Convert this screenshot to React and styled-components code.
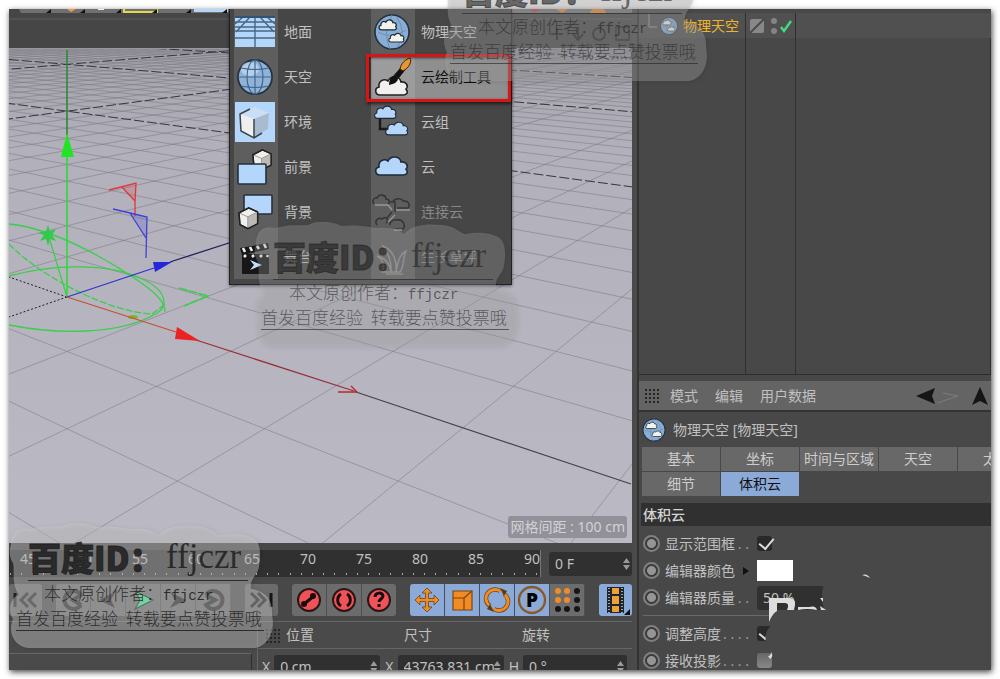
import React from 'react'
import styled, { createGlobalStyle, css } from 'styled-components'

// ground grid, seen along its diagonal
const GRID = { x: 67, horizon: -14, depth: 6.73, rise: 2094, spread: 934 }

function project(i, j) {
  const d = GRID.depth + (i + j) / 2
  return [
    (GRID.x + (GRID.spread * (i - j)) / 2 / d).toFixed(1),
    (GRID.horizon + GRID.rise / d).toFixed(1),
  ]
}

function gridPath(c) {
  const near = -2 * GRID.depth - c + 1
  const a = project(c, near)
  const b = project(c, 120)
  const e = project(near, c)
  const f = project(120, c)
  return `M${a[0]} ${a[1]}L${b[0]} ${b[1]}M${e[0]} ${e[1]}L${f[0]} ${f[1]}`
}

const minorLines = []
const majorLines = []
for (let c = -8; c <= 60; c += 1) {
  if (c === 0) continue
  if (c % 10 === 0) majorLines.push(c)
  else minorLines.push(c)
}

const cloud = 'M8 27C3 27 2 20 7 19C6 13 12 10 16 13C19 7 28 8 29 14C34 13 37 18 34 21C37 25 34 27 31 27Z'

function Cloud({ fill = '#b5d6fb', stroke = '#1d2b38', ...rest }) {
  return <path d={cloud} fill={fill} stroke={stroke} strokeWidth="1.6" {...rest} />
}

function Cube({ x = 0, y = 0, s = 1 }) {
  return (
    <g transform={`translate(${x} ${y}) scale(${s})`} stroke="#222" strokeWidth="1.4" strokeLinejoin="round">
      <path d="M1 6L11 1L20 5L20 17L10 22L2 18Z" fill="#f1efec" />
      <path d="M10 10L20 5L20 17L10 22Z" fill="#bdbab6" stroke="none" />
      <path d="M1 6L10 10L20 5M10 10V22" fill="none" stroke="#999" strokeWidth="1" />
      <path d="M1 6L11 1L20 5L20 17L10 22L2 18Z" fill="none" />
    </g>
  )
}

function Globe() {
  return (
    <g>
      <circle cx="20" cy="20" r="17" fill="#8fb3d8" stroke="#26323e" strokeWidth="1.8" />
      <ellipse cx="15" cy="12" rx="9" ry="7" fill="#c3dcf4" opacity="0.7" />
      <g fill="none" stroke="#42678c" strokeWidth="1.2">
        <ellipse cx="20" cy="20" rx="8" ry="17" />
        <path d="M20 3V37M3 20H37M6 11Q20 14 34 11M6 29Q20 32 34 29" />
      </g>
    </g>
  )
}

function SkyGlobe({ size }) {
  return (
    <svg width={size} height={size} viewBox="0 0 40 40">
      <circle cx="20" cy="20" r="17" fill="#8aaed3" stroke="#26323e" strokeWidth="1.6" />
      <path d="M6 20Q20 28 34 18M20 3Q10 20 18 37M24 4Q36 20 25 36" fill="none" stroke="#6b90b5" />
      <Cloud fill="#f3f3ee" transform="translate(5 3) scale(0.55)" strokeWidth="2.4" />
      <Cloud fill="#f3f3ee" transform="translate(15 17) scale(0.48)" strokeWidth="2.4" />
    </svg>
  )
}

const menuArt = {
  floor: (
    <g>
      <rect y="5" width="40" height="30" fill="#b5d6fb" />
      <g stroke="#466785" strokeWidth="1.4">
        <path d="M0 10H40M0 15H40M0 19H40M0 26H40M20 5V35M15 5L1 20M25 5L39 20M8 5L0 12M32 5L40 12" fill="none" />
      </g>
      <path d="M0 5H40" stroke="#34536f" strokeWidth="2" />
    </g>
  ),
  sky: <Globe />,
  environment: (
    <g>
      <rect width="40" height="40" fill="#b5d6fb" />
      <path d="M5 12L20 5L34 11L33 27L19 36L6 29Z" fill="#c9dff5" />
      <path d="M5 12L19 17V36L6 29Z" fill="#efefef" />
      <path d="M19 17L34 11L33 27L19 36Z" fill="#a9bccf" />
      <path d="M15 7L5 12L6 29L19 36L27 31M19 17V36" fill="none" stroke="#3b444d" strokeWidth="1.5" />
    </g>
  ),
  foreground: (
    <g>
      <Cube x="17" y="2" s="0.95" />
      <rect x="3" y="17" width="28" height="20" rx="1" fill="#b5d6fb" stroke="#26313c" strokeWidth="1.6" />
    </g>
  ),
  background: (
    <g>
      <rect x="9" y="3" width="28" height="19" rx="1" fill="#b5d6fb" stroke="#26313c" strokeWidth="1.6" />
      <Cube x="3" y="15" s="0.98" />
    </g>
  ),
  stage: (
    <g>
      <rect x="7" y="17" width="27" height="20" fill="#171717" />
      <path d="M5 11L33 6L34 12L7 18Z" fill="#171717" />
      <path d="M8 11L10 15M15 10L17 14M22 9L24 12M29 7L31 11M9 20L11 18M17 20L19 18M25 20L27 18M32 20L33 18" stroke="#eee" strokeWidth="2.6" />
      <path d="M15 23L27 28L15 33L19 28Z" fill="#c6e0fb" />
    </g>
  ),
  cloudPaint: (
    <g>
      <Cloud fill="#f2f0ef" transform="translate(0 11)" stroke="#222" />
      <path d="M17 28C17 23 19 19 23 18L26 21C26 25 22 27 17 28Z" fill="#111" />
      <path d="M22 18L30 9L34 12L27 21Z" fill="#111" />
      <path d="M28 12C29 6 34 2 38 1C40 5 37 11 31 14Z" fill="#e8962e" stroke="#3a2409" />
    </g>
  ),
  cloudGroup: (
    <g>
      <path d="M8 16V27H16" fill="none" stroke="#1a1a1a" strokeWidth="2.4" />
      <Cloud transform="translate(0 -2) scale(0.68)" />
      <Cloud transform="translate(11 14) scale(0.7)" />
    </g>
  ),
  cloud: <Cloud transform="translate(0 1)" />,
  cloudLink: (
    <g fill="none" stroke="#303030" strokeWidth="1.6" opacity="0.85">
      <path d="M2 12C-1 8 3 5 5 6C7 1 14 3 14 7C18 7 18 11 16 12M18 10H23V20M21 9C23 7 29 5 31 9C36 8 39 13 36 16H25" />
      <path d="M20 20L14 27M5 33C2 29 6 25 10 27C14 23 18 29 14 31M18 33C17 29 23 27 26 28C31 27 34 34 31 37H23" />
      <path d="M3 13H16L20 18M24 18H38M23 23L16 30M22 38H30" stroke="#a3a3a3" strokeWidth="1.4" />
    </g>
  ),
  grass: (
    <g fill="none" stroke="#8f8f8f" strokeWidth="1.4">
      <path d="M10 35C14 26 8 20 5 19C13 21 18 27 19 35C20 22 14 14 11 9C20 13 25 22 24 35C26 24 28 17 34 14C30 22 33 28 28 35Z" />
      <path d="M14 37H31" />
    </g>
  ),
}

const leftMenu = [
  ['floor', '地面'],
  ['sky', '天空'],
  ['environment', '环境'],
  ['foreground', '前景'],
  ['background', '背景'],
  ['stage', '舞台'],
]

const rightMenu = [
  ['physicalSky', '物理天空'],
  ['cloudPaint', '云绘制工具'],
  ['cloudGroup', '云组'],
  ['cloud', '云'],
  ['cloudLink', '连接云'],
  ['grass', '生长草坪'],
]

function MenuList({ items, active, disabledFrom }) {
  return (
    <MenuColumn>
      {items.map(([art, label], index) => (
        <MenuButton key={art} $active={art === active} disabled={index >= disabledFrom}>
          <MenuIcon $active={art === active}>
            {art === 'physicalSky' ? (
              <SkyGlobe size={40} />
            ) : (
              <svg width="40" height="40" viewBox="0 0 40 40">{menuArt[art]}</svg>
            )}
          </MenuIcon>
          {label}
        </MenuButton>
      ))}
    </MenuColumn>
  )
}

function Viewport() {
  return (
    <Scene viewBox="9 49 623 494" preserveAspectRatio="xMinYMid slice" aria-label="透视视图">
      <defs>
        <linearGradient id="floor" x1="0" y1="0" x2="0" y2="1">
          <stop offset="0" stopColor="#a3a1aa" />
          <stop offset="0.2" stopColor="#b2b0ba" />
          <stop offset="1" stopColor="#bbb9c3" />
        </linearGradient>
      </defs>
      <rect x="9" y="49" width="623" height="494" fill="url(#floor)" />
      <path d={minorLines.map(gridPath).join('')} fill="none" stroke="#74727c" strokeOpacity="0.48" />
      <path d={majorLines.map(gridPath).join('')} fill="none" stroke="#36353c" strokeDasharray="10 3" />
      <path d="M67 297L9 277M67 297L9 317" stroke="#222" strokeDasharray="2 2" />
      <path d="M356 392L631 484" stroke="#444" strokeWidth="1.2" />

      <g fill="none" stroke="#39cf4c" strokeWidth="1.3">
        <path d="M9 224C60 229 120 268 140 282C160 296 165 304 165 312" />
        <path d="M9 276C60 262 112 265 140 278C168 290 168 306 157 313C120 336 55 334 9 325" />
        <path d="M9 244C40 276 108 312 152 314L165 304" strokeDasharray="7 2" />
        <path d="M48 234L67 297" />
        <path d="M179 288L208 296L184 306" strokeWidth="1.6" strokeDasharray="9 1" />
      </g>
      <path d="M48 225L50 231L56 229L52 235L56 241L50 239L48 246L46 239L40 241L44 235L38 233L46 231Z" fill="#33c94c" />
      <ellipse cx="133" cy="317" rx="5" ry="2" fill="#7fb52d" />

      <path d="M67 50V135" stroke="#2b8a36" strokeWidth="1.6" />
      <path d="M67 135V297" stroke="#2fd83c" strokeWidth="1.6" />
      <path d="M67 133L61 157H74Z" fill="#22e422" />
      <path d="M67 297L154 268" stroke="#2834cf" strokeWidth="1.3" />
      <path d="M170 262L235 241" stroke="#1d1f5e" strokeWidth="1.3" />
      <path d="M153 262L172 262L155 272Z" fill="#2626da" />
      <path d="M67 297L176 332" stroke="#c8502f" strokeWidth="1.2" />
      <path d="M196 340L354 391" stroke="#96303a" strokeWidth="1.3" />
      <path d="M351 386L357 392L338 392" fill="none" stroke="#b32b2b" strokeWidth="1.4" />
      <path d="M177 327L200 341L175 339Z" fill="#ec2222" />

      <g fill="none" strokeWidth="1.3">
        <path d="M109 190L136 183L135 202V216M122 187L135 201" stroke="#e0363c" />
        <path d="M113 209L130 213L147 217L146 258M130 213L146 238" stroke="#4040d8" />
      </g>
      <path d="M123 187L136 183L135 200Z" fill="#e0363c" opacity="0.2" />
      <path d="M130 213L147 217L146 238Z" fill="#4040d8" opacity="0.2" />
    </Scene>
  )
}

const playArt = {
  start: <path d="M6 9V23M19 9L12 16L19 23M27 9L20 16L27 23" fill="none" stroke="#222" strokeWidth="3" />,
  prevKey: <path d="M25 21A9 9 0 1 1 25 11L17 16L25 21" fill="none" stroke="#222" strokeWidth="4" />,
  prev: <path d="M8 16L24 8L20 16L24 24Z" fill="#1c1c1c" />,
  play: <path d="M9 7L27 16L9 25L14 16Z" fill="#34f590" stroke="#14301f" strokeWidth="1.2" />,
  next: <path d="M9 8L25 16L9 24L14 16Z" fill="#1c1c1c" />,
  nextKey: <path d="M10 11A9 9 0 1 1 10 21L19 16L10 11" fill="none" stroke="#222" strokeWidth="4" />,
  end: <path d="M27 9V23M14 9L21 16L14 23M7 9L14 16L7 23" fill="none" stroke="#151515" strokeWidth="3" />,
  key: (
    <g>
      <circle cx="17" cy="16" r="11" fill="#ef5257" stroke="#2b1516" strokeWidth="2" />
      <path d="M12 20L22 12" stroke="#1a0c0c" strokeWidth="3" />
      <circle cx="12" cy="20" r="3" fill="#1a0c0c" />
      <circle cx="21" cy="12" r="3" fill="#1a0c0c" />
    </g>
  ),
  auto: (
    <g>
      <circle cx="17" cy="16" r="11" fill="#ef5257" stroke="#2b1516" strokeWidth="2" />
      <path d="M14 10A7 7 0 0 0 14 22M20 10A7 7 0 0 1 20 22" fill="none" stroke="#1a0c0c" strokeWidth="2.8" />
    </g>
  ),
  help: (
    <g>
      <circle cx="17" cy="16" r="11" fill="#ef5257" stroke="#2b1516" strokeWidth="2" />
      <path d="M13 13C13 8 21 8 21 12C21 15 17 15 17 18M17 20V23" fill="none" stroke="#1a0c0c" strokeWidth="3" />
    </g>
  ),
  move: (
    <path
      d="M17 4L22 9H18.500V14.500H24V11L29 16L24 21V17.500H18.500V23H22L17 28L12 23H15.500V17.500H10V21L5 16L10 11V14.500H15.500V9H12Z"
      fill="#f28b23"
      stroke="#6b4317"
      strokeWidth="0.8"
    />
  ),
  scale: (
    <g stroke="#7a4513" strokeWidth="1.2">
      <path d="M8 7H27V26H8Z" fill="#f28b23" />
      <path d="M8 14H19V26M19 14L27 7" fill="none" />
    </g>
  ),
  rotate: (
    <g>
      <path d="M10 22A9 9 0 0 1 20 7M24 10A9 9 0 0 1 14 25" fill="none" stroke="#6b4317" strokeWidth="4.4" />
      <path d="M10 22A9 9 0 0 1 20 7M24 10A9 9 0 0 1 14 25" fill="none" stroke="#f28b23" strokeWidth="3" />
      <path d="M20 4L27 7L24 12ZM14 28L7 25L10 20Z" fill="#5d3b16" />
    </g>
  ),
  film: (
    <g>
      <rect x="8" y="3" width="17" height="26" fill="#20242c" />
      <path d="M13 4H20V10H13ZM13 12H20V20H13ZM13 22H20V28H13Z" fill="#efa139" />
      <path d="M10 4V29M23 4V29" stroke="#c7d3e6" strokeWidth="1.5" strokeDasharray="1 2" />
      <path d="M31 25V31H25Z" fill="#111" />
    </g>
  ),
  param: (
    <g>
      <circle cx="17" cy="16" r="13" fill="none" stroke="#8a5a26" strokeWidth="2.4" />
      <text x="17" y="23" textAnchor="middle" fontFamily="Open Sans, sans-serif" fontWeight="800" fontSize="19">P</text>
    </g>
  ),
  points: (
    <g>
      {[7, 16, 25].map((y, row) =>
        [8, 17, 27].map((x, col) => (
          <circle key={`${x}-${y}`} cx={x} cy={y} r="3" fill={row < 2 && col < 2 ? '#f28b23' : '#161616'} />
        ))
      )}
    </g>
  ),
}

const playGroups = [
  [['start', '转到开始']],
  [['prevKey', '上一关键帧'], ['prev', '上一帧'], ['play', '播放'], ['next', '下一帧'], ['nextKey', '下一关键帧']],
  [['end', '转到结束']],
  [['key', '记录'], ['auto', '自动关键帧'], ['help', '帮助']],
  [['move', '移动', 1], ['scale', '缩放', 1], ['rotate', '旋转', 1], ['param', '参数', 1], ['points', '点级别']],
  [['film', '动画', 1]],
]

function Watermark({ x, y, tone, ink }) {
  return (
    <Stamp style={{ left: x, top: y }} $ink={ink}>
      <svg width="270" height="128" viewBox="0 0 270 128" aria-hidden="true">
        <path
          d="M2 22C2 8 10 3 22 6C36 2 45 4 54 3C66 -3 78 0 88 4C108 2 116 6 125 6C140 5 145 9 150 12C160 1 176 2 188 3C202 4 206 12 212 12C228 9 236 12 242 14C252 18 252 30 250 44C249 52 240 56 242 66C256 68 264 76 263 92C266 104 262 122 246 125H22C6 125 -2 110 4 96C-2 86 2 74 10 72C2 60 6 48 4 40C0 34 0 28 2 22Z"
          fill={tone}
        />
      </svg>
      <StampText>
        <StampTitle>
          <b>百度ID：</b>
          <span>ffjczr</span>
        </StampTitle>
        <StampLine $inset>
          本文原创作者：<span>ffjczr</span>
        </StampLine>
        <StampLine $ruled>首发百度经验&nbsp;<i />转载要点赞投票哦</StampLine>
      </StampText>
    </Stamp>
  )
}

function App() {
  return (
    <Page>
      <GlobalStyle />
      <Frame>
        <Main>
          <TopBar>
            <svg width="623" height="39" viewBox="9 9 623 39" aria-hidden="true">
              <path d="M19 9H229V13H21Z" fill="#707070" />
              <path d="M124 9V12H157V9" fill="none" stroke="#e3d84a" strokeWidth="2" />
              <path d="M194 9H228V12H194Z" fill="#b5d6fb" />
              <path d="M51 9V13H46ZM85 9V13H80ZM121 9V13H116ZM157 9V13H152ZM191 9V13H186ZM227 9V13H222Z" fill="#111" />
              <path d="M67 9H76L71 12Z" fill="#ef9a42" />
              <path d="M98 9H104V10H98Z" fill="#eee" />
              <path d="M9 19H632" stroke="#5c5c5c" />
              <path d="M512 9H632V13H512Z" fill="#777" />
              <path d="M530 9H540L535 12Z" fill="#d43a40" />
              <path d="M556 9H568L562 13ZM592 9H604L606 13H590Z" fill="#ea8a35" />
              <g fill="none" stroke="#222" strokeWidth="2">
                <path d="M557 28V40M551 34H563M578 27V38M573 34L578 40L583 34" />
                <circle cx="599" cy="34" r="6" />
                <path d="M616 27H629V40H616Z" strokeWidth="1.4" />
              </g>
            </svg>
          </TopBar>
          <ViewArea>
            <Viewport />
            <GridInfo>网格间距 : 100 cm</GridInfo>
          </ViewArea>
          <Timeline>
            <Ruler>
              <Frames>
                {[45, 50, 55, 60, 65, 70, 75, 80, 85, 90].map(n => (
                  <li key={n}>{n}</li>
                ))}
              </Frames>
            </Ruler>
            <FrameField>
              <input aria-label="当前帧" defaultValue="0 F" />
              <Spinner />
            </FrameField>
          </Timeline>
          <Playback>
            {playGroups.map(group => (
              <ButtonGroup key={group[0][0]}>
                {group.map(([name, label, on]) => (
                  <PlayButton key={name} aria-label={label} $on={on}>
                    <svg width="34" height="32" viewBox="0 0 34 32">{playArt[name]}</svg>
                  </PlayButton>
                ))}
              </ButtonGroup>
            ))}
          </Playback>
          <Bottom>
            <Materials />
            <Coordinates>
              <CoordHead>
                <Grip />
                <span>位置</span>
                <span>尺寸</span>
                <span>旋转</span>
              </CoordHead>
              <CoordRow>
                {[['X', '0 cm'], ['X', '43763.831 cm'], ['H', '0 °']].map(([axis, value]) => (
                  <CoordField key={value}>
                    {axis}
                    <CoordBox>
                      <input defaultValue={value} />
                      <Spinner />
                    </CoordBox>
                  </CoordField>
                ))}
              </CoordRow>
            </Coordinates>
          </Bottom>
        </Main>

        <Side>
          <ObjectTree>
            <TreeRow>
              <TreeName>
                <svg width="20" height="24" viewBox="0 0 20 24">
                  <path d="M10 0V13H18" fill="none" stroke="#999" />
                </svg>
                <SkyGlobe size={20} />
                <span>物理天空</span>
              </TreeName>
              <TreeFlags>
                <svg width="48" height="24" viewBox="0 0 48 24">
                  <rect x="4" y="6" width="14" height="14" rx="2" fill="#888" />
                  <path d="M4 20L18 6" stroke="#4b4b4b" strokeWidth="2" />
                  <circle cx="28" cy="8" r="3" fill="#848484" />
                  <circle cx="28" cy="18" r="3" fill="#848484" />
                  <path d="M35 14L38 18L45 8" fill="none" stroke="#3fdc84" strokeWidth="2.4" />
                </svg>
              </TreeFlags>
            </TreeRow>
            <TreeBody>
              <div />
              <div />
              <div />
            </TreeBody>
          </ObjectTree>
          <AttrBar>
            <Grip />
            <button>模式</button>
            <button>编辑</button>
            <button>用户数据</button>
            <svg width="76" height="26" viewBox="0 0 76 26" aria-hidden="true">
              <path d="M22 20L43 13L28 10" fill="none" stroke="#7c7c7c" />
              <path d="M1 13L20 5L17 13L20 21Z" fill="#151515" />
              <path d="M65 4L73 22L65 18L57 22Z" fill="#151515" />
            </svg>
          </AttrBar>
          <ObjectTitle>
            <SkyGlobe size={26} />
            物理天空 [物理天空]
          </ObjectTitle>
          <Tabs>
            {['基本', '坐标', '时间与区域', '天空', '太阳'].map(t => (
              <Tab key={t}>{t}</Tab>
            ))}
          </Tabs>
          <Tabs>
            <Tab>细节</Tab>
            <Tab $active>体积云</Tab>
          </Tabs>
          <Section>体积云</Section>
          <Props>
            <PropRow>
              <Dot />
              <label htmlFor="bounds">显示范围框<i>. .</i></label>
              <Check id="bounds" type="checkbox" defaultChecked />
            </PropRow>
            <PropRow>
              <Dot />
              <label htmlFor="color">编辑器颜色<Arrow /></label>
              <Swatch id="color" aria-label="编辑器颜色" />
            </PropRow>
            <PropRow>
              <Dot />
              <label htmlFor="quality">编辑器质量<i>. .</i></label>
              <Quality id="quality" defaultValue="50 %" />
            </PropRow>
            <Rule />
            <PropRow>
              <Dot />
              <label htmlFor="height">调整高度<i>. . . .</i></label>
              <Check id="height" type="checkbox" defaultChecked />
            </PropRow>
            <PropRow>
              <Dot />
              <label htmlFor="shadow">接收投影<i>. . . .</i></label>
              <Check id="shadow" type="checkbox" />
            </PropRow>
            <Remnant viewBox="0 0 120 100" aria-hidden="true">
              <path d="M68 12Q62 22 68 40Q34 36 20 48Q6 58 9 70Q13 78 30 78L116 76V12Z" fill="#484848" />
              <path d="M12 26H32Q39 26 38 33L37 38H30Q33 31 28 31H20V39Q15 42 12 50Z" fill="#ddd" />
              <path d="M41 35H52Q59 33 60 38Q50 36 41 38ZM63 34L69 38H64ZM63 26H66V30Z" fill="#ddd" />
              <path d="M105 3Q110 1 113 6Q109 4 105 3Z" fill="#ddd" />
              <path d="M11 84Q14 84 14 80Q17 84 13 87Z" fill="#ddd" />
            </Remnant>
          </Props>
        </Side>

        <Menu>
          <MenuList items={leftMenu} disabledFrom={9} />
          <MenuList items={rightMenu} active="cloudPaint" disabledFrom={4} />
          <Highlight />
        </Menu>
      </Frame>

      <Watermark x={9} y={523} tone="rgba(205,205,205,0.43)" ink="0.88" />
      <Watermark x={254} y={222} tone="rgba(178,178,178,0.28)" ink="0.6" />
      <Watermark x={443} y={-44} tone="rgba(170,170,170,0.36)" ink="0.6" />
    </Page>
  )
}

export default App

const GlobalStyle = createGlobalStyle`
  * {
    box-sizing: border-box;
  }

  body {
    margin: 0;
    background: #fff;
    color: #c0c0c0;
    font-family: "Noto Sans", "Noto Sans CJK SC", sans-serif;
    font-size: 14px;
    line-height: 20px;
  }

  button, input {
    font: inherit;
    color: inherit;
    border: 0;
    padding: 0;
    margin: 0;
    background: none;
  }

  svg {
    display: block;
    flex: none;
  }
`

const Page = styled.div`
  position: relative;
  height: 100vh;
  padding: 9px;
  overflow: hidden;
`

const Frame = styled.div`
  position: relative;
  display: grid;
  grid-template-columns: minmax(0, 1fr) 354px;
  gap: 5px;
  height: 100%;
  background: #4a4a4a;
  box-shadow: 1px 2px 6px rgba(0, 0, 0, 0.75);
`

const Main = styled.main`
  display: flex;
  flex-direction: column;
  min-width: 0;
  min-height: 0;
`

const TopBar = styled.div`
  height: 40px;
  overflow: hidden;
  background: #464646;
  border-bottom: 1px solid #999;
`

const ViewArea = styled.div`
  position: relative;
  flex: 1;
  min-height: 0;
  overflow: hidden;
`

const Scene = styled.svg`
  width: 100%;
  height: 100%;
`

const GridInfo = styled.div`
  position: absolute;
  right: 5px;
  bottom: 5px;
  padding: 1px 2px;
  border-radius: 3px;
  background: #92919a;
  color: #d2d2d6;
`

const Timeline = styled.div`
  display: flex;
  gap: 8px;
  height: 36px;
  padding: 7px 0 2px;
  background: #484848;
`

const Ruler = styled.div`
  flex: 1;
  overflow: hidden;
  border-right: 1px solid #777;
  background: #303030;
`

const Frames = styled.ul`
  display: flex;
  list-style: none;
  margin: 0 0 0 -9px;
  padding: 0;

  li {
    flex: none;
    width: 56px;
    height: 27px;
    line-height: 18px;
    text-align: center;
    background: radial-gradient(circle, #aaa 1px, transparent 1px) 5px 20px / 11px 8px repeat-x;
  }
`

const FrameField = styled.div`
  display: flex;
  align-items: center;
  width: 83px;
  height: 24px;
  margin-top: 2px;
  padding: 0 2px 0 6px;
  border-radius: 3px;
  background: #303030;

  input {
    flex: 1;
    width: 0;
  }
`

const Spinner = styled.span`
  width: 7px;
  height: 12px;
  background: #999;
  clip-path: polygon(50% 0, 100% 42%, 0 42%, 0 58%, 100% 58%, 50% 100%, 0 58%, 0 42%);
`

const Playback = styled.div`
  display: flex;
  gap: 14px;
  height: 43px;
  padding: 5px 0;
  background: #484848;
  border-bottom: 1px solid #666;
`

const ButtonGroup = styled.div`
  display: flex;
  border-radius: 3px;
  overflow: hidden;
`

const PlayButton = styled.button`
  display: flex;
  align-items: center;
  justify-content: center;
  width: 35px;
  height: 32px;
  background: ${props => (props.$on ? '#8caad8' : '#6c6c6c')};
  border-right: 1px solid #4b4f57;

  &:only-child {
    width: 33px;
    border-right: 0;
  }
`

const Bottom = styled.div`
  display: grid;
  grid-template-columns: 243px minmax(0, 1fr);
  gap: 5px;
  height: 48px;
  overflow: hidden;
`

const Materials = styled.div`
  margin-top: 31px;
  border-top: 1px solid #666;
  border-right: 1px solid #2e2e2e;
`

const Coordinates = styled.div`
  min-width: 0;
  border-left: 1px solid #666;
`

const CoordHead = styled.div`
  display: grid;
  grid-template-columns: 13px 1fr 1fr 1fr;
  column-gap: 8px;
  align-items: center;
  height: 27px;
  padding-left: 7px;
  border-bottom: 1px solid #666;
`

const CoordRow = styled.div`
  display: grid;
  grid-template-columns: repeat(3, 1fr);
  gap: 5px;
  padding: 6px 5px 0 4px;
`

const CoordField = styled.label`
  display: flex;
  gap: 4px;
  line-height: 24px;
`

const CoordBox = styled.span`
  display: flex;
  align-items: center;
  flex: 1;
  min-width: 0;
  height: 24px;
  padding: 0 3px 0 6px;
  border-radius: 3px;
  background: #303030;

  input {
    flex: 1;
    width: 0;
  }
`

const Grip = styled.span`
  width: 15px;
  height: 15px;
  background: radial-gradient(circle, #262626 1px, transparent 1px) 0 0 / 4px 4px;
`

const Side = styled.aside`
  display: flex;
  flex-direction: column;
  min-height: 0;
  overflow: hidden;
  background: #484848;
  border-left: 2px solid #333;
`

const treeColumns = css`
  display: grid;
  grid-template-columns: 107px 50px 1fr;
`

const ObjectTree = styled.div`
  display: flex;
  flex-direction: column;
  flex: 1;
  padding-top: 4px;
  border-bottom: 1px solid #2c2c2c;
`

const TreeRow = styled.div`
  ${treeColumns}
  height: 25px;
  background: #505050;
`

const TreeName = styled.div`
  display: flex;
  align-items: center;
  border-right: 1px solid #2e2e2e;
  color: #f0b428;

  span {
    margin-left: 4px;
  }
`

const TreeFlags = styled.div`
  border-right: 1px solid #2e2e2e;
`

const TreeBody = styled.div`
  ${treeColumns}
  flex: 1;

  div {
    border-right: 1px solid #303030;
  }
`

const AttrBar = styled.div`
  display: flex;
  align-items: center;
  gap: 17px;
  height: 31px;
  margin-top: 6px;
  padding-left: 5px;
  background: #646464;
  border-bottom: 2px solid #333;

  ${Grip} {
    margin-right: -6px;
  }

  svg {
    margin-left: auto;
  }
`

const ObjectTitle = styled.div`
  display: flex;
  align-items: center;
  gap: 6px;
  height: 35px;
  padding-left: 2px;
`

const Tabs = styled.div`
  display: flex;
  gap: 1px;
  margin: 0 0 1px 3px;
  overflow: hidden;
`

const Tab = styled.button`
  flex: none;
  width: 78px;
  height: 24px;
  white-space: nowrap;
  background: ${props => (props.$active ? '#8caad8' : '#686868')};

  && {
    color: ${props => (props.$active ? '#111' : '#cdcdcd')};
  }
`

const Section = styled.h2`
  margin: 6px 0 0 2px;
  height: 23px;
  padding-left: 2px;
  font-size: 14px;
  font-weight: 500;
  line-height: 23px;
  color: #d4d4d4;
  background: #303030;
`

const Props = styled.div`
  position: relative;
  height: 144px;
  padding: 4px 0 0 4px;
  overflow: hidden;
`

const PropRow = styled.div`
  display: flex;
  align-items: center;
  height: 27px;

  label {
    display: flex;
    justify-content: space-between;
    align-items: center;
    width: 84px;
    margin: 0 8px 0 5px;
    white-space: nowrap;
  }

  i {
    font-style: normal;
    color: #999;
  }
`

const Dot = styled.span`
  width: 17px;
  height: 17px;
  border: 2px solid #808080;
  border-radius: 50%;
  background: radial-gradient(circle, #959595 4px, #3a3a3a 5px);
`

const Check = styled.input`
  appearance: none;
  width: 15px;
  height: 15px;
  border-radius: 3px;
  background: linear-gradient(#666, #888);

  &:checked {
    background: #292929;
  }

  &:checked::after {
    content: '';
    display: block;
    width: 7px;
    height: 12px;
    margin: -1px 0 0 5px;
    border: solid #ddd;
    border-width: 0 2px 2px 0;
    transform: rotate(40deg);
  }
`

const Arrow = styled.span`
  border: 4px solid transparent;
  border-left: 6px solid #111;
  border-right: 0;
`

const Swatch = styled.button`
  && {
    width: 36px;
    height: 21px;
    background: #fff;
  }
`

const Quality = styled.input`
  && {
    width: 67px;
    height: 24px;
    padding-left: 6px;
    background: #303030;
    border-radius: 3px;
  }
`

const Rule = styled.hr`
  width: 130px;
  margin: 4px 0;
  border: 0;
  border-top: 1px solid #6a6a6a;
`

// leftover of a badge lying over the property rows
const Remnant = styled.svg`
  position: absolute;
  left: 118px;
  top: 46px;
  width: 120px;
  height: 100px;
`

const Menu = styled.div`
  position: absolute;
  left: 220px;
  top: 0;
  display: grid;
  grid-template-columns: 137px 1fr;
  width: 283px;
  padding: 0 1px 5px 4px;
  background: #464646;
  border: solid #222;
  border-width: 0 1px 1px;
  box-shadow: 0 1px 3px rgba(0, 0, 0, 0.5);
`

const MenuColumn = styled.div`
  display: flex;
  flex-direction: column;
`

const MenuButton = styled.button`
  display: flex;
  align-items: center;
  gap: 6px;
  height: 45px;
  text-align: left;

  && {
    background: ${props => (props.$active ? '#8f8f8f' : 'none')};
    color: ${props => (props.$active ? '#111' : props.disabled ? '#888' : '#c0c0c0')};
  }
`

const MenuIcon = styled.span`
  display: flex;
  align-items: center;
  width: 44px;
  height: 45px;
  padding-left: 1px;
  background: ${props => (props.$active ? '#9c9c9c' : '#5e5e5e')};
`

const Highlight = styled.div`
  position: absolute;
  left: 136px;
  top: 45px;
  width: 145px;
  height: 48px;
  border: 3px solid #d81414;
  box-shadow: 1px 2px 3px rgba(0, 0, 0, 0.6), inset 1px 1px 3px rgba(0, 0, 0, 0.6);
`

const Stamp = styled.div`
  position: absolute;
  pointer-events: none;
  color: rgba(32, 32, 32, ${props => props.$ink});

  svg {
    filter: drop-shadow(1px 1px 2px rgba(0, 0, 0, 0.25));
  }
`

const StampText = styled.div`
  position: absolute;
  left: 7px;
  top: 10px;
  width: 256px;
`

const StampTitle = styled.div`
  display: flex;
  align-items: center;
  height: 48px;
  margin: 0 24px 0 12px;
  border-bottom: 1px solid;
  font-size: 35px;
  line-height: 44px;
  white-space: nowrap;

  b {
    width: 138px;
    overflow: hidden;
    font-family: "Noto Sans CJK SC", sans-serif;
    font-size: 33px;
    font-weight: 900;
    -webkit-text-stroke: 1px;
  }

  span {
    font-family: "Liberation Serif", serif;
  }
`

const StampLine = styled.div`
  height: 25px;
  padding-left: ${props => (props.$inset ? '28px' : '0')};
  ${props => props.$ruled && 'margin-right: 8px; border-bottom: 1px solid;'}
  font-family: "Noto Sans CJK SC", sans-serif;
  font-size: 17px;
  font-weight: 300;
  line-height: 23px;
  white-space: nowrap;

  span {
    font-family: "Liberation Mono", monospace;
    font-size: 14px;
  }

  i {
    display: inline-block;
    width: 4px;
  }
`
